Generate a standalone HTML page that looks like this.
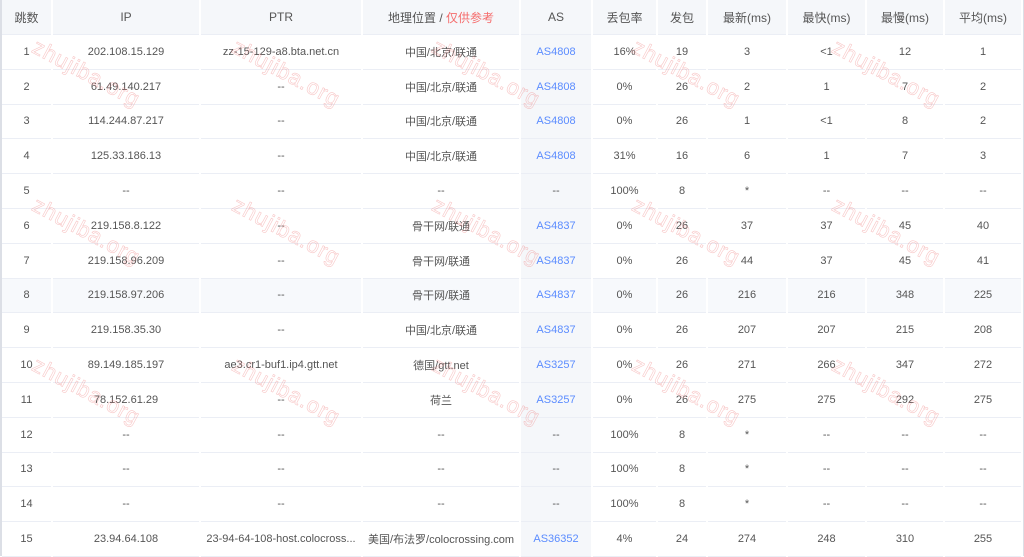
<!DOCTYPE html>
<html><head><meta charset="utf-8"><style>
body{margin:0;width:1024px;height:556px;overflow:hidden;background:#fff;font-family:"Liberation Sans","Noto Sans CJK SC",sans-serif;}
.wrap{position:relative;width:1024px;height:556px;border-left:2px solid #dcdfe6;border-right:2px solid #dcdfe6;box-sizing:border-box;}
table{border-collapse:collapse;table-layout:fixed;width:1020px;}
td,th{text-align:center;font-size:11px;color:#555;padding:0;border-bottom:1px solid #ebeef5;border-right:2px solid #fff;white-space:nowrap;overflow:hidden;}
th{height:34px;background:#f5f7fa;font-weight:normal;font-size:12px;color:#555;}
td{height:33.8px;}
td.as{background:#f5f7fa;color:#5b8cff;}
tr.hl td{background:#f7f9fc;}
.red{color:#f56c6c;}
.wm{position:absolute;font-size:22px;color:transparent;-webkit-text-stroke:0.6px rgba(240,130,130,0.45);transform:rotate(28deg);transform-origin:left top;letter-spacing:1px;pointer-events:none;}
</style></head><body><div class="wrap">
<table>
<colgroup><col style="width:50px"><col style="width:148px"><col style="width:162px"><col style="width:158px"><col style="width:72px"><col style="width:65px"><col style="width:50px"><col style="width:80px"><col style="width:79px"><col style="width:78px"><col style="width:78px"></colgroup>
<tr><th>跳数</th><th>IP</th><th>PTR</th><th>地理位置 / <span class="red">仅供参考</span></th><th>AS</th><th>丢包率</th><th>发包</th><th>最新(ms)</th><th>最快(ms)</th><th>最慢(ms)</th><th>平均(ms)</th></tr>
<tr><td>1</td><td>202.108.15.129</td><td>zz-15-129-a8.bta.net.cn</td><td>中国/北京/联通</td><td class="as">AS4808</td><td>16%</td><td>19</td><td>3</td><td>&lt;1</td><td>12</td><td>1</td></tr>
<tr><td>2</td><td>61.49.140.217</td><td>--</td><td>中国/北京/联通</td><td class="as">AS4808</td><td>0%</td><td>26</td><td>2</td><td>1</td><td>7</td><td>2</td></tr>
<tr><td>3</td><td>114.244.87.217</td><td>--</td><td>中国/北京/联通</td><td class="as">AS4808</td><td>0%</td><td>26</td><td>1</td><td>&lt;1</td><td>8</td><td>2</td></tr>
<tr><td>4</td><td>125.33.186.13</td><td>--</td><td>中国/北京/联通</td><td class="as">AS4808</td><td>31%</td><td>16</td><td>6</td><td>1</td><td>7</td><td>3</td></tr>
<tr><td>5</td><td>--</td><td>--</td><td>--</td><td class="as" style="color:#555">--</td><td>100%</td><td>8</td><td>*</td><td>--</td><td>--</td><td>--</td></tr>
<tr><td>6</td><td>219.158.8.122</td><td>--</td><td>骨干网/联通</td><td class="as">AS4837</td><td>0%</td><td>26</td><td>37</td><td>37</td><td>45</td><td>40</td></tr>
<tr><td>7</td><td>219.158.96.209</td><td>--</td><td>骨干网/联通</td><td class="as">AS4837</td><td>0%</td><td>26</td><td>44</td><td>37</td><td>45</td><td>41</td></tr>
<tr class="hl"><td>8</td><td>219.158.97.206</td><td>--</td><td>骨干网/联通</td><td class="as">AS4837</td><td>0%</td><td>26</td><td>216</td><td>216</td><td>348</td><td>225</td></tr>
<tr><td>9</td><td>219.158.35.30</td><td>--</td><td>中国/北京/联通</td><td class="as">AS4837</td><td>0%</td><td>26</td><td>207</td><td>207</td><td>215</td><td>208</td></tr>
<tr><td>10</td><td>89.149.185.197</td><td>ae3.cr1-buf1.ip4.gtt.net</td><td>德国/gtt.net</td><td class="as">AS3257</td><td>0%</td><td>26</td><td>271</td><td>266</td><td>347</td><td>272</td></tr>
<tr><td>11</td><td>78.152.61.29</td><td>--</td><td>荷兰</td><td class="as">AS3257</td><td>0%</td><td>26</td><td>275</td><td>275</td><td>292</td><td>275</td></tr>
<tr><td>12</td><td>--</td><td>--</td><td>--</td><td class="as" style="color:#555">--</td><td>100%</td><td>8</td><td>*</td><td>--</td><td>--</td><td>--</td></tr>
<tr><td>13</td><td>--</td><td>--</td><td>--</td><td class="as" style="color:#555">--</td><td>100%</td><td>8</td><td>*</td><td>--</td><td>--</td><td>--</td></tr>
<tr><td>14</td><td>--</td><td>--</td><td>--</td><td class="as" style="color:#555">--</td><td>100%</td><td>8</td><td>*</td><td>--</td><td>--</td><td>--</td></tr>
<tr><td>15</td><td>23.94.64.108</td><td>23-94-64-108-host.colocross...</td><td>美国/布法罗/colocrossing.com</td><td class="as">AS36352</td><td>4%</td><td>24</td><td>274</td><td>248</td><td>310</td><td>255</td></tr>
</table>
<div class="wm" style="left:38px;top:34px">zhujiba.org</div>
<div class="wm" style="left:238px;top:34px">zhujiba.org</div>
<div class="wm" style="left:438px;top:34px">zhujiba.org</div>
<div class="wm" style="left:638px;top:34px">zhujiba.org</div>
<div class="wm" style="left:838px;top:34px">zhujiba.org</div>
<div class="wm" style="left:38px;top:192px">zhujiba.org</div>
<div class="wm" style="left:238px;top:192px">zhujiba.org</div>
<div class="wm" style="left:438px;top:192px">zhujiba.org</div>
<div class="wm" style="left:638px;top:192px">zhujiba.org</div>
<div class="wm" style="left:838px;top:192px">zhujiba.org</div>
<div class="wm" style="left:38px;top:352px">zhujiba.org</div>
<div class="wm" style="left:238px;top:352px">zhujiba.org</div>
<div class="wm" style="left:438px;top:352px">zhujiba.org</div>
<div class="wm" style="left:638px;top:352px">zhujiba.org</div>
<div class="wm" style="left:838px;top:352px">zhujiba.org</div>
</div></body></html>
